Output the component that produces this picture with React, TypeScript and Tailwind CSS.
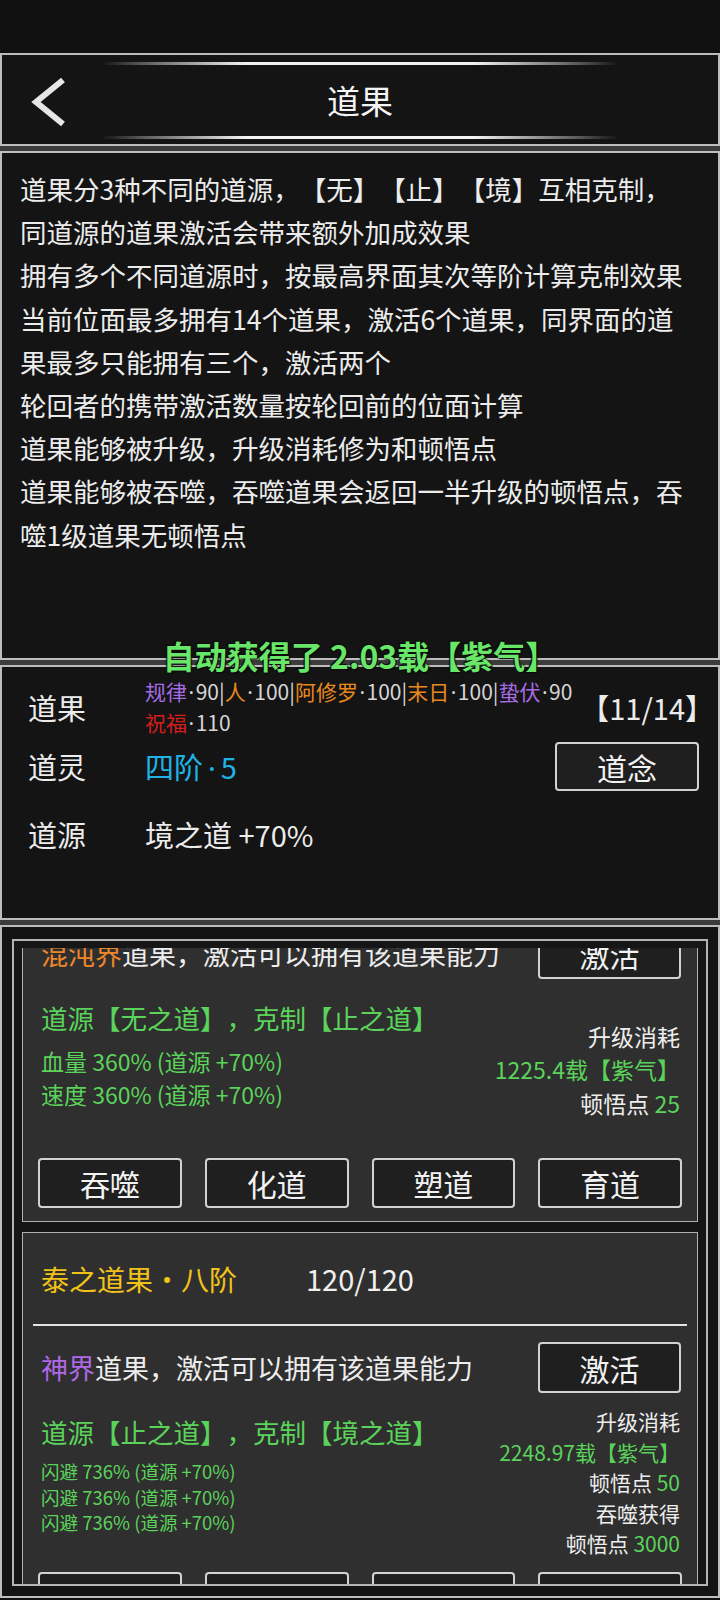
import type { ReactNode } from 'react';

const descLines = [
  '道果分3种不同的道源，【无】【止】【境】互相克制，',
  '同道源的道果激活会带来额外加成效果',
  '拥有多个不同道源时，按最高界面其次等阶计算克制效果',
  '当前位面最多拥有14个道果，激活6个道果，同界面的道',
  '果最多只能拥有三个，激活两个',
  '轮回者的携带激活数量按轮回前的位面计算',
  '道果能够被升级，升级消耗修为和顿悟点',
  '道果能够被吞噬，吞噬道果会返回一半升级的顿悟点，吞',
  '噬1级道果无顿悟点',
];

const tags = [
  { name: '规律', color: 'text-[#a56be2]', val: '90' },
  { name: '人', color: 'text-[#e8891f]', val: '100' },
  { name: '阿修罗', color: 'text-[#e8891f]', val: '100' },
  { name: '末日', color: 'text-[#e8891f]', val: '100' },
  { name: '蛰伏', color: 'text-[#a56be2]', val: '90' },
];

const actions = ['吞噬', '化道', '塑道', '育道'];

// narrow middle dot, the CJK font draws it full width
function Dot({ className = '' }: { className?: string }) {
  return <span className={`font-['Noto_Sans',sans-serif] ${className}`}>·</span>;
}

function Band() {
  return <div className="h-[5px] bg-[#3c3c3c]" />;
}

function Btn({ children, className }: { children: ReactNode; className: string }) {
  return (
    <div
      className={`flex items-center justify-center border-2 border-[#d2d2d2] rounded-[4px] bg-[#1f1f1f] text-[30px] leading-none text-[#f2f2f2] ${className}`}
    >
      {children}
    </div>
  );
}

function GlowLine() {
  return (
    <div className="mx-auto w-[518px] h-[3px] bg-[linear-gradient(90deg,transparent,#5a5a5a_8%,#f2f2f2_28%,#f2f2f2_72%,#5a5a5a_92%,transparent)]" />
  );
}

interface CardProps {
  title?: string;
  realm: string;
  realmClass: string;
  source: string;
  stats: string[];
  statClass: string;
  right: ReactNode;
  rightClass: string;
}

function DaoCard({ title, realm, realmClass, source, stats, statClass, right, rightClass }: CardProps) {
  return (
    <div className="border border-[#b0b0b0] bg-[#2f2f2f]">
      <div className="h-[91px] pl-[18px] flex items-center">
        {title && (
          <>
            <span className="w-[265px] shrink-0 text-[28px] leading-none text-[#f2c21a] whitespace-nowrap">{title}</span>
            <span className="text-[29px] leading-none text-[#f0f0f0]">120/120</span>
          </>
        )}
      </div>
      <div className="mx-[10px] h-[2px] bg-[#e4e4e4]" />
      <div className="mt-[16px] h-[51px] pl-[18px] pr-[16px] flex items-center justify-between">
        <div className="text-[27px] leading-none text-[#ededed] whitespace-nowrap">
          <span className={realmClass}>{realm}</span>道果，激活可以拥有该道果能力
        </div>
        <Btn className="w-[143px] h-[51px] shrink-0">激活</Btn>
      </div>
      <div className="h-[179px] flex justify-between pl-[18px] pr-[17px]">
        <div className="pt-[21px]">
          <div className="text-[26.5px] leading-[36px] text-[#5bd35b] whitespace-nowrap">{source}</div>
          <div className={`mt-[9px] text-[#5bd35b] whitespace-nowrap ${statClass}`}>
            {stats.map((s, i) => (
              <div key={i}>{s}</div>
            ))}
          </div>
        </div>
        <div className={`self-center text-right whitespace-nowrap text-[#ededed] ${rightClass}`}>{right}</div>
      </div>
      <div className="grid grid-cols-4 gap-[23px] px-[15px] pb-[13px]">
        {actions.map((a) => (
          <Btn key={a} className="h-[50px]">
            {a}
          </Btn>
        ))}
      </div>
    </div>
  );
}

export default function App() {
  return (
    <div className="relative w-[720px] h-[1600px] overflow-hidden bg-[#121212] font-['Noto_Sans_CJK_SC','Noto_Sans',sans-serif] text-[#ececec] [text-spacing-trim:space-all]">
      {/* status bar */}
      <div className="h-[53px] bg-[#111111]" />

      {/* header */}
      <div className="relative h-[93px] border-2 border-[#bdbdbd] bg-[#141414] pt-[7px]">
        <GlowLine />
        <div className="h-[71px] flex items-center justify-center text-[33px] leading-none text-[#f4f4f4]">道果</div>
        <GlowLine />
        <svg className="absolute left-[27px] top-[22px]" width="40" height="50" viewBox="0 0 40 50">
          <polyline points="34,3 7,25 34,47" fill="none" stroke="#e6e6e6" strokeWidth="6" strokeLinejoin="miter" />
        </svg>
      </div>
      <Band />

      {/* description */}
      <div className="h-[509px] border-2 border-[#bdbdbd] bg-[#141414] pl-[18px] pt-[14px]">
        {descLines.map((l, i) => (
          <div key={i} className="text-[26.5px] leading-[43.2px] whitespace-nowrap text-[#ececec]">
            {l}
          </div>
        ))}
      </div>
      <Band />

      {/* stats */}
      <div className="h-[255px] border-2 border-[#bdbdbd] bg-[#141414] pt-[10px] pl-[26px] pr-[19px]">
        <div className="h-[60px] flex items-center">
          <div className="w-[117px] shrink-0 text-[29px] leading-none">道果</div>
          <div className="flex-1 text-[21px] leading-[30px] text-[#d6d6d6] whitespace-nowrap">
            <div>
              {tags.map((t, i) => (
                <span key={t.name}>
                  {i > 0 && '|'}
                  <span className={t.color}>{t.name}</span>
                  <Dot className="mx-[1.5px]" />
                  {t.val}
                </span>
              ))}
            </div>
            <div>
              <span className="text-[#d21d1d]">祝福</span>
              <Dot className="mx-[1.5px]" />
              110
            </div>
          </div>
          <div className="shrink-0 text-[29px] leading-none mr-[-15px]">【11/14】</div>
        </div>
        <div className="mt-[5px] h-[49px] flex items-center">
          <div className="w-[117px] shrink-0 text-[29px] leading-none">道灵</div>
          <div className="flex-1 text-[29px] leading-none text-[#1fb3e6]">
            四阶<Dot className="mx-[5px]" />5
          </div>
          <Btn className="w-[144px] h-[49px] shrink-0">道念</Btn>
        </div>
        <div className="mt-[19px] h-[49px] flex items-center">
          <div className="w-[117px] shrink-0 text-[29px] leading-none">道源</div>
          <div className="text-[29px] leading-none">境之道 +70%</div>
        </div>
      </div>
      <Band />

      {/* dao fruit list, scrolled so the first card's top is hidden */}
      <div className="h-[673px] border-2 border-[#bdbdbd] bg-[#141414] pt-[12px] px-[10px] pb-[10px]">
        <div className="h-[647px] border-2 border-[#b4b4b4] bg-[#161616] pt-[7px] px-[8px] flex flex-col">
          <div className="h-[636px] overflow-hidden">
            <div className="-mt-[130px] flex flex-col gap-[10px]">
              <DaoCard
                realm="混沌界"
                realmClass="text-[#f0872a]"
                source="道源【无之道】，克制【止之道】"
                stats={['血量 360% (道源 +70%)', '速度 360% (道源 +70%)']}
                statClass="text-[23px] leading-[33px]"
                rightClass="text-[23px] leading-[33.5px] pt-[3px]"
                right={
                  <>
                    <div>升级消耗</div>
                    <div className="text-[#5bd35b]">1225.4载【紫气】</div>
                    <div>
                      顿悟点 <span className="text-[#5bd35b]">25</span>
                    </div>
                  </>
                }
              />
              <DaoCard
                title="泰之道果·八阶"
                realm="神界"
                realmClass="text-[#b068e8]"
                source="道源【止之道】，克制【境之道】"
                stats={['闪避 736% (道源 +70%)', '闪避 736% (道源 +70%)', '闪避 736% (道源 +70%)']}
                statClass="text-[18.5px] leading-[25.5px]"
                rightClass="text-[21px] leading-[30.6px]"
                right={
                  <>
                    <div>升级消耗</div>
                    <div className="text-[#5bd35b]">2248.97载【紫气】</div>
                    <div>
                      顿悟点 <span className="text-[#5bd35b]">50</span>
                    </div>
                    <div>吞噬获得</div>
                    <div>
                      顿悟点 <span className="text-[#5bd35b]">3000</span>
                    </div>
                  </>
                }
              />
            </div>
          </div>
        </div>
      </div>

      {/* toast */}
      <div className="absolute left-0 right-0 top-[636px] z-10 text-center text-[32px] leading-[38px] font-bold text-[#68e668] whitespace-nowrap [text-shadow:0_0_2px_#0a0a0a,1px_1px_1px_#0a0a0a,-1px_-1px_1px_#0a0a0a]">
        自动获得了 2.03载【紫气】
      </div>
    </div>
  );
}
